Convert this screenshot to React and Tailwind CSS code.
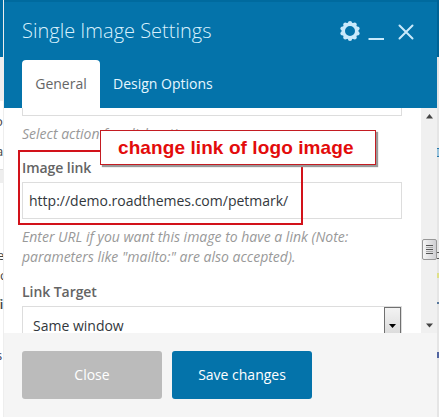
import React from "react";

const gearPoints = Array.from({ length: 10 }, (_, i) => {
  const a = (i * Math.PI) / 5;
  return { x: 10 + 7.9 * Math.sin(a), y: 10 - 7.9 * Math.cos(a) };
});

function GearIcon() {
  return (
    <svg className="h-5 w-5" viewBox="0 0 20 20" fill="#c9e9fb">
      {gearPoints.map((p, i) => (
        <circle key={i} cx={p.x} cy={p.y} r="2.1" />
      ))}
      <circle cx="10" cy="10" r="6.7" fill="none" stroke="#c9e9fb" strokeWidth="3.4" />
    </svg>
  );
}

function Header() {
  return (
    <header className="flex h-[108px] flex-col justify-between border-t-2 border-[#006a9e] bg-[#0473aa] pr-[23px] pl-[18px]">
      <div className="flex h-[58px] items-center justify-between">
        <h1 className="whitespace-nowrap text-[20px] font-light leading-[58px] text-[#d9f1fd]">Single Image Settings</h1>
        <div className="flex items-center">
          <GearIcon />
          <svg className="ml-[8px] h-5 w-4" viewBox="0 0 16 20" fill="none" stroke="#c9e9fb" strokeWidth="2">
            <path d="M0.5 18H16" />
          </svg>
          <svg className="ml-[14px] h-5 w-4" viewBox="0 0 16 20" fill="none" stroke="#c9e9fb" strokeWidth="2">
            <path d="M1.5 4.5L14.5 17.5M14.5 4.5L1.5 17.5" strokeLinecap="round" />
          </svg>
        </div>
      </div>
      <nav className="flex h-12 text-[14px] leading-[48px]">
        <div className="w-[78px] rounded-t bg-white text-center text-[#666]">General</div>
        <div className="ml-[13px] whitespace-nowrap font-medium text-[#e6f7ff]">Design Options</div>
      </nav>
    </header>
  );
}

function Scrollbar() {
  return (
    <div className="flex w-4 flex-col items-center bg-[#f0f0f0]">
      <svg className="mt-[6px] h-[5px] w-[7px]" viewBox="0 0 7 5"><path d="M3.5 0L7 4.5H0Z" fill="#444" /></svg>
      <div className="mt-[120px] flex h-[21px] w-[15px] flex-col items-center justify-center gap-px rounded-[2px] border border-[#979797] bg-linear-to-r from-[#f5f5f5] to-[#cfcfd2]">
        <i className="h-px w-[7px] bg-[#555]" />
        <i className="h-px w-[7px] bg-[#aaa]" />
        <i className="h-px w-[7px] bg-[#555]" />
        <i className="h-px w-[7px] bg-[#aaa]" />
        <i className="h-px w-[7px] bg-[#555]" />
      </div>
      <svg className="mt-[63px] h-[5px] w-[7px]" viewBox="0 0 7 5"><path d="M0 0.5H7L3.5 4.5Z" fill="#444" /></svg>
    </div>
  );
}

function Body() {
  return (
    <div className="flex h-[225px] overflow-hidden bg-white">
      <div className="w-[417px] shrink-0 pr-[19px] pl-[18px]">
        <div className="h-2 border border-t-0 border-[#ddd]" />
        <p className="mt-[8px] whitespace-nowrap text-[14px] italic leading-5 text-[#999]">Select action for click action.</p>
        <div className="mt-[14px] whitespace-nowrap text-[14px] font-semibold leading-5 tracking-[-0.06px] text-[#646464]">Image link</div>
        <div className="mt-[4px] h-[37px] whitespace-nowrap border border-[#ddd] pl-[6px] text-[14px] leading-[35px] text-[#32373c]">
          http://demo.roadthemes.com/petmark/
        </div>
        <p className="mt-[8px] whitespace-nowrap text-[14px] italic leading-5 text-[#999]">
          Enter URL if you want this image to have a link (Note:<br />parameters like "mailto:" are also accepted).
        </p>
        <div className="mt-[15px] whitespace-nowrap text-[14px] font-semibold leading-5 tracking-[-0.06px] text-[#646464]">Link Target</div>
        <div className="mt-[4px] flex h-[37px] justify-between border border-[#ddd] pl-[10px] text-[14px] leading-[38px] text-[#32373c]">
          <span>Same window</span>
          <span className="flex w-[17px] items-center justify-center border border-[#707070] bg-linear-to-b from-[#f3f3f3] to-[#d5d5d5]">
            <svg className="mt-[3px] h-1 w-[7px]" viewBox="0 0 7 4"><path d="M0 0H7L3.5 4Z" fill="#000" /></svg>
          </span>
        </div>
      </div>
      <Scrollbar />
    </div>
  );
}

export default function App() {
  return (
    <div className="relative flex h-[417px] w-[439px] overflow-hidden bg-white font-['Open_Sans','Noto_Sans',sans-serif]">
      <aside className="relative w-1 shrink-0 overflow-hidden border-r border-[#eee] bg-white text-[13px] leading-5 text-[#444]">
        <div className="h-[57px] bg-[#006da4]" />
        <div className="h-[44px] bg-[#eee]" />
        <div className="mt-[10px] -ml-[5px] whitespace-nowrap">or</div>
        <div className="mt-[10px] -ml-[4px]">a</div>
        <div className="mt-[8px] h-[14px] border-t border-[#ddd] bg-[#eee]" />
        <div className="mt-[62px] -ml-[3px]">e</div>
        <div>c</div>
        <div className="mt-[9px] -ml-[5px] whitespace-nowrap font-semibold">fi</div>
        <div className="mt-[31px] -ml-[4px] text-[#335]">s</div>
      </aside>
      <main className="w-[433px] shrink-0">
        <Header />
        <Body />
        <footer className="flex h-[84px] gap-[10px] bg-[#f5f5f5] pt-[18px] pl-[18px] text-center text-[14px] leading-[48px] text-white">
          <button className="h-12 w-[140px] rounded-[3px] bg-[#bbb]">Close</button>
          <button className="h-12 w-[140px] rounded-[3px] bg-[#0473aa]">Save changes</button>
        </footer>
      </main>
      <aside className="w-0.5 shrink-0 bg-[#e5e5e5]">
        <div className="h-[57px] bg-[#006396]" />
        <div className="mt-[91px] h-[9px] border-y border-[#2878aa] bg-[#9bc4dc]" />
        <div className="mt-[95px] h-[7px] border-y border-[#555]" />
        <div className="mt-[14px] h-[5px] bg-[#dfe08a]" />
        <div className="mt-[24px] h-[2px] bg-[#58779b]" />
        <div className="mt-[48px] h-[6px] bg-[#5265a0]" />
      </aside>
      <div className="absolute top-[150px] left-[18px] h-[75px] w-[285px] border-2 border-[#d2121a]" />
      <div className="absolute top-[130px] left-[100px] h-[35px] w-[276px] whitespace-nowrap border border-[#c41c22] bg-white pl-[17px] font-['Liberation_Sans',Arial,sans-serif] text-[19px] font-bold leading-[33px] tracking-[0.09px] text-[#e30b0b] shadow-[2px_2px_1px_#999]">
        change link of logo image
      </div>
    </div>
  );
}
